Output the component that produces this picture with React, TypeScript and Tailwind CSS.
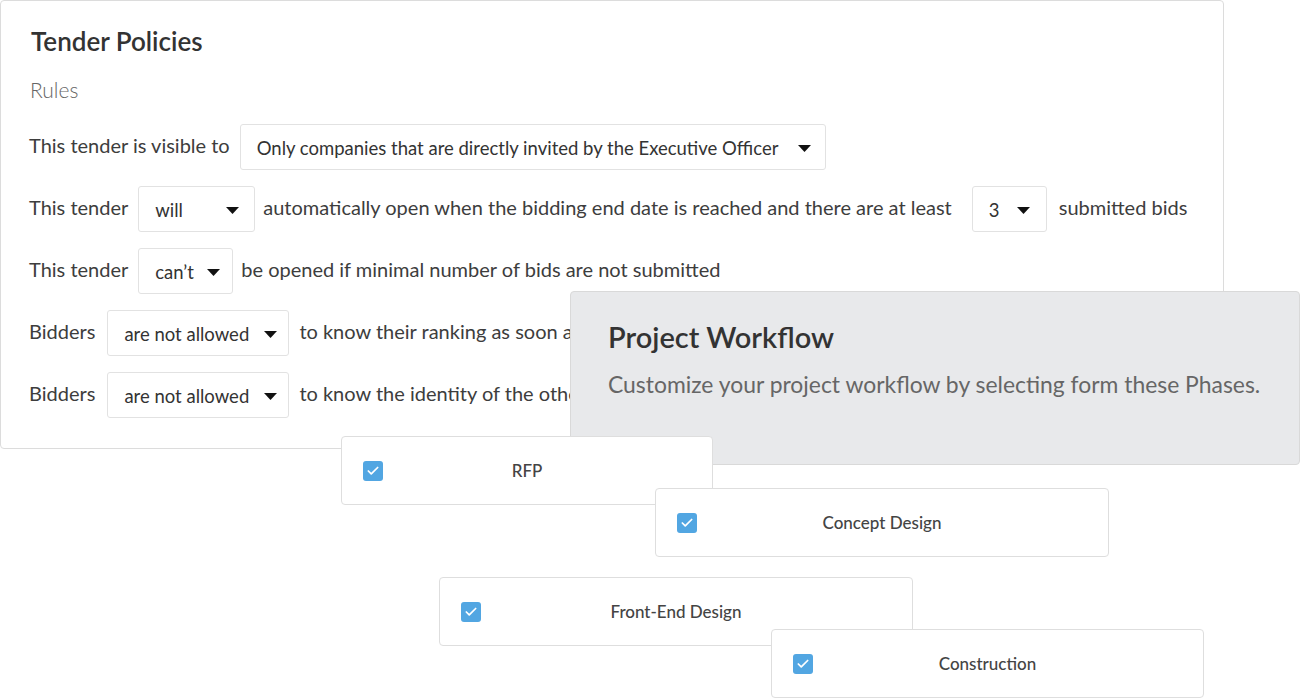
import { Check } from "lucide-react";

const Caret = () => (
  <svg width="13" height="7" viewBox="0 0 13 7" className="shrink-0">
    <path d="M0 0 L13 0 L6.5 7 Z" fill="#111" />
  </svg>
);

const Select = ({
  value,
  width,
  pr,
  className = "",
}: {
  value: string;
  width: string;
  pr: string;
  className?: string;
}) => (
  <div
    className={`${width} ${pr} ${className} h-[46px] shrink-0 flex items-center justify-between pl-4 border border-[#e2e2e2] rounded-[3px] bg-white text-[18.5px] text-[#333] pt-[3px]`}
  >
    <span className="whitespace-nowrap">{value}</span>
    <Caret />
  </div>
);

const Row = ({ children }: { children: React.ReactNode }) => (
  <div className="flex items-center gap-[10px] h-[46px] text-[20px] text-[#3d3d3d] whitespace-nowrap">
    {children}
  </div>
);

const Label = ({ children, className = "" }: { children: React.ReactNode; className?: string }) => (
  <span className={`mb-[5px] ${className}`}>{children}</span>
);

const Phase = ({ label, className }: { label: string; className: string }) => (
  <div
    className={`absolute h-[69px] grid grid-cols-[42px_1fr_42px] items-center bg-white border border-[#dedede] rounded-[4px] ${className}`}
  >
    <div className="pl-[21px]">
      <div className="w-[20px] h-[20px] rounded-[3px] bg-[#52a6e2] flex items-center justify-center">
        <Check size={14} strokeWidth={3} color="white" />
      </div>
    </div>
    <div className="text-center text-[17px] font-medium text-[#444]">{label}</div>
    <div />
  </div>
);

export default function App() {
  return (
    <div
      className="relative w-[1300px] h-[699px] bg-white overflow-hidden"
      style={{ fontFamily: "Lato, 'Open Sans', sans-serif" }}
    >
      {/* Tender Policies */}
      <div className="absolute left-0 top-0 w-[1224px] h-[449px] bg-white border border-[#dcdcdc] rounded-[4px] pt-[23px] px-[28px] overflow-hidden">
        <h2 className="text-[26px] leading-[34px] font-semibold text-[#333] pl-[2px]">Tender Policies</h2>
        <div className="mt-[18px] text-[21px] leading-[28px] font-light text-[#666] pl-[1px]">Rules</div>
        <div className="mt-[20px] flex flex-col gap-4">
          <Row>
            <Label>This tender is visible to</Label>
            <Select
              width="w-[586px]"
              pr="pr-[14px]"
              value="Only companies that are directly invited by the Executive Officer"
            />
          </Row>
          <Row>
            <Label>This tender</Label>
            <Select width="w-[117px]" pr="pr-[15px]" value="will" />
            <Label className="-ml-[2px]">
              automatically open when the bidding end date is reached and there are at least
            </Label>
            <Select width="w-[75px]" pr="pr-[16px]" value="3" className="ml-[10px]" />
            <Label className="ml-[2px]">submitted bids</Label>
          </Row>
          <Row>
            <Label>This tender</Label>
            <Select width="w-[95px]" pr="pr-[12px]" value="can’t" />
            <Label className="-ml-[2px]">be opened if minimal number of bids are not submitted</Label>
          </Row>
          <Row>
            <Label>Bidders</Label>
            <Select width="w-[182px]" pr="pr-[11px]" value="are not allowed" className="ml-[2px]" />
            <Label>to know their ranking as soon as they submit</Label>
          </Row>
          <Row>
            <Label>Bidders</Label>
            <Select width="w-[182px]" pr="pr-[11px]" value="are not allowed" className="ml-[2px]" />
            <Label>to know the identity of the other bidders</Label>
          </Row>
        </div>
      </div>

      {/* Project Workflow */}
      <div className="absolute left-[570px] top-[291px] w-[730px] h-[174px] bg-[#e8e9eb] border border-[#d9d9d9] rounded-[4px] pl-[37px] pt-[28px]">
        <h2 className="text-[29px] leading-[34px] font-semibold text-[#333]">Project Workflow</h2>
        <p className="mt-[15px] text-[22.9px] leading-[30px] text-[#666]">
          Customize your project workflow by selecting form these Phases.
        </p>
      </div>

      <Phase label="RFP" className="left-[341px] top-[436px] w-[372px]" />
      <Phase label="Concept Design" className="left-[655px] top-[488px] w-[454px]" />
      <Phase label="Front-End Design" className="left-[439px] top-[577px] w-[474px]" />
      <Phase label="Construction" className="left-[771px] top-[629px] w-[433px]" />
    </div>
  );
}
